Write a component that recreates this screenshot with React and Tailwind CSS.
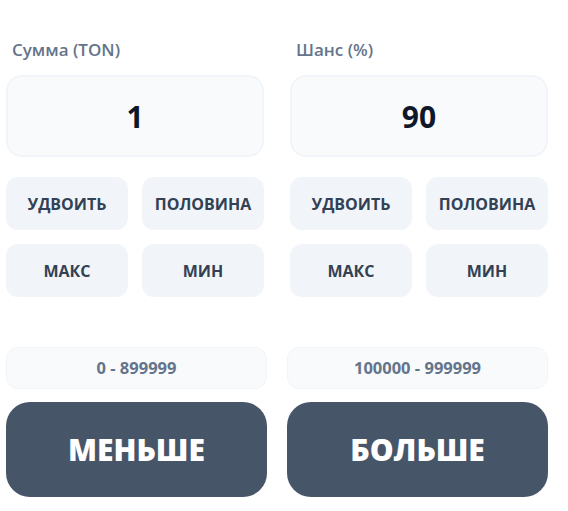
import React from 'react';

const font = { fontFamily: '"Open Sans", "Noto Sans", sans-serif' };

function Field({ label, value }) {
  return (
    <div>
      <div className="pl-[6px] text-[17px] font-semibold leading-5 text-[#64748b]">{label}</div>
      <div className="mt-[15px] flex h-[82px] items-center justify-center rounded-2xl border-2 border-[#f1f5f9] bg-[#f8fafc] text-[30px] font-bold text-[#0f172a]">
        {value}
      </div>
      <div className="mt-[20px] grid grid-cols-2 gap-[14px]">
        {['УДВОИТЬ', 'ПОЛОВИНА', 'МАКС', 'МИН'].map((t) => (
          <button
            key={t}
            className="flex h-[53px] items-center justify-center rounded-xl bg-[#f1f5f9] text-[16px] font-bold text-[#334155]"
          >
            {t}
          </button>
        ))}
      </div>
    </div>
  );
}

function Bet({ range, label }) {
  return (
    <div>
      <div className="flex h-[42px] items-center justify-center rounded-xl border border-[#f1f5f9] bg-[#f8fafc] text-[16.5px] font-bold text-[#64748b]">
        {range}
      </div>
      <button className="mt-[13px] flex h-[95px] w-full items-center justify-center rounded-[24px] bg-[#475569] text-[30px] font-extrabold text-white">
        {label}
      </button>
    </div>
  );
}

export default function App() {
  return (
    <div className="min-h-[511px] bg-white px-[6px] pt-[40px]" style={font}>
      <div className="grid grid-cols-2 gap-[26px] pr-[14px]">
        <Field label="Сумма (TON)" value="1" />
        <Field label="Шанс (%)" value="90" />
      </div>
      <div className="mt-[50px] grid grid-cols-2 gap-[20px] pr-[14px]">
        <Bet range="0 - 899999" label="МЕНЬШЕ" />
        <Bet range="100000 - 999999" label="БОЛЬШЕ" />
      </div>
    </div>
  );
}
